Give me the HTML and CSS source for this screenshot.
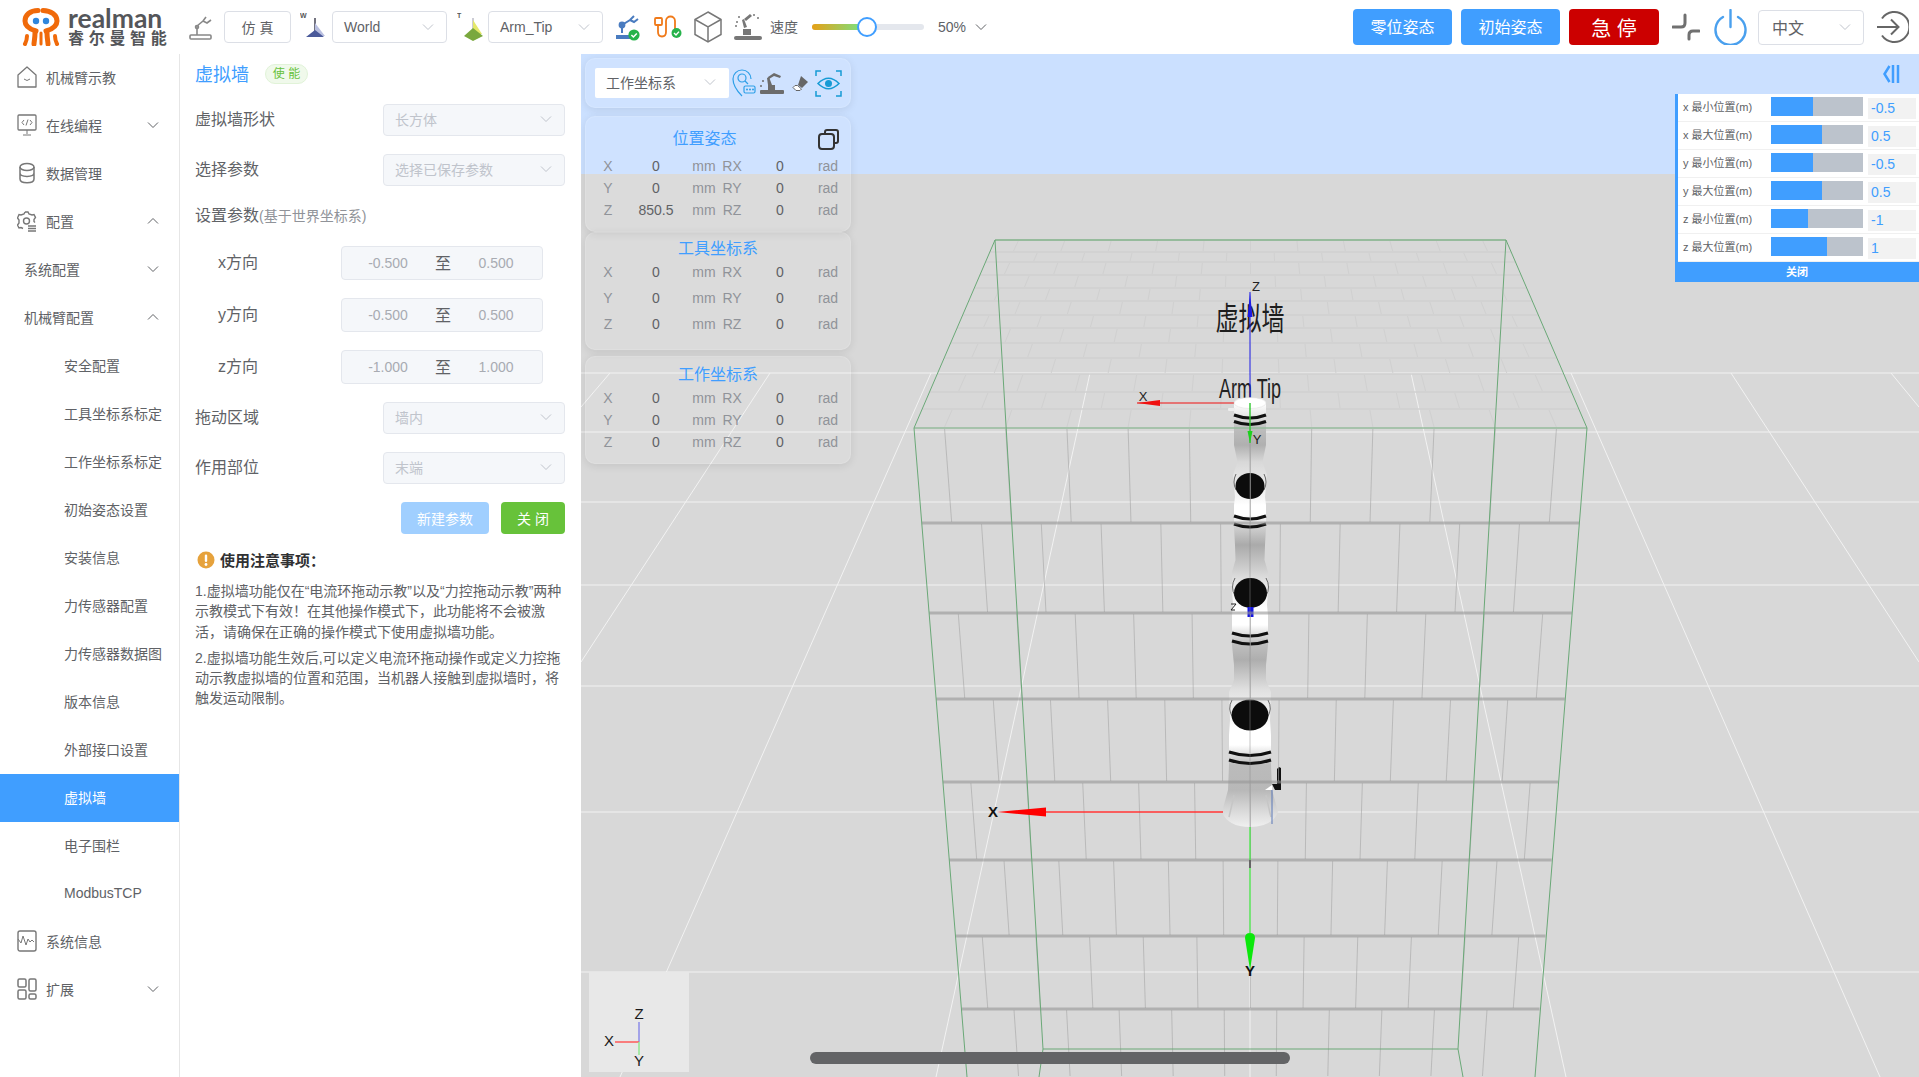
FILE: index.html
```html
<!DOCTYPE html>
<html lang="zh">
<head>
<meta charset="utf-8">
<title>realman</title>
<link rel="stylesheet" href="styles.css">
</head>
<body>
<svg class="defs" width="0" height="0">
  <symbol id="chev" viewBox="0 0 12 8"><path d="M1 1.500 6 6.500 11 1.500" fill="none" stroke="currentColor" stroke-width="1"/></symbol>
  <symbol id="arrowup" viewBox="0 0 12 8"><path d="M1 6.500 6 1.500 11 6.500" fill="none" stroke="currentColor" stroke-width="1"/></symbol>
  <linearGradient id="body" gradientUnits="userSpaceOnUse" x1="0" y1="0" x2="0" y2="1000">
    <stop offset=".403" stop-color="#fff"/><stop offset=".415" stop-color="#e8e8e8"/><stop offset=".428" stop-color="#bdbdbd"/><stop offset=".445" stop-color="#b0b0b0"/><stop offset=".462" stop-color="#d8d8d8"/><stop offset=".497" stop-color="#f5f5f5"/><stop offset=".505" stop-color="#fff"/><stop offset=".515" stop-color="#fff"/><stop offset=".527" stop-color="#d0d0d0"/><stop offset=".545" stop-color="#aaa"/><stop offset=".565" stop-color="#c8c8c8"/><stop offset=".585" stop-color="#e8e8e8"/><stop offset=".608" stop-color="#fff"/><stop offset=".625" stop-color="#fff"/><stop offset=".643" stop-color="#c0c0c0"/><stop offset=".66" stop-color="#aeaeae"/><stop offset=".69" stop-color="#e0e0e0"/><stop offset=".728" stop-color="#fff"/><stop offset=".745" stop-color="#fff"/><stop offset=".765" stop-color="#bbb"/><stop offset=".79" stop-color="#b8b8b8"/><stop offset=".81" stop-color="#d8d8d8"/><stop offset=".827" stop-color="#f0f0f0"/>
  </linearGradient>
</svg>

<header class="topbar">
  <div class="brand">
    <svg class="logo" viewBox="0 0 38 38">
      <g fill="none" stroke="#f06a0a" stroke-width="5" stroke-linecap="round">
        <path d="M16 2.500C8 2.500 3 7 3 13c0 5 4 8 11 10"/>
        <path d="M21 2.500C29 2.500 35 7 35 13c0 5-4 8-11 10"/>
        <path d="M13 25c0 5-1 9-1 11"/>
        <path d="M25 25c0 5 1 9 1 11"/>
        <path d="M5 28c0 3-1 6-2 8" stroke-width="4"/>
        <path d="M33 28c0 3 1 6 2 8" stroke-width="4"/>
        <path d="M19 25v11" stroke-width="3"/>
      </g>
      <circle cx="14" cy="13" r="3.200" fill="#2f86dc"/><circle cx="24" cy="13" r="3.200" fill="#2f86dc"/>
    </svg>
    <div class="brand-text"><span class="brand-en">realman</span><span class="brand-cn">睿尔曼智能</span></div>
  </div>

  <svg class="ic-robot ml-22" viewBox="0 0 23 28"><g fill="none" stroke="#888" stroke-width="1.600"><path d="M8 18V13L14 8l3-4M14 8l4 2 4-3"/><path d="M8 18v4"/><circle cx="8" cy="14" r="1.500"/><rect x="1" y="22" width="21" height="4" rx="1"/></g></svg>
  <button class="btn-plain ml-12">仿 真</button>
  <svg class="ic-axis ml-9" viewBox="0 0 30 30"><text x="0" y="6" class="ax-t">W</text><path d="M15 6v14" stroke="#445" stroke-width="1.500"/><path d="M15 11l10 13H15z" fill="#b9bfe0"/><path d="M15 18l9 7H6z" fill="#4a5a9a"/></svg>
  <div class="sel w115 ml-2"><span>World</span><svg class="chev"><use href="#chev"/></svg></div>
  <svg class="ic-axis ml-10" viewBox="0 0 30 30"><text x="0" y="6" class="ax-t">T</text><path d="M16 6v14" stroke="#99a" stroke-width="1"/><path d="M16 8l9 14H16z" fill="#e4e86a"/><path d="M16 16l10 8-10 5-9-5z" fill="#7aa83e"/></svg>
  <div class="sel w115 ml-1"><span>Arm_Tip</span><svg class="chev"><use href="#chev"/></svg></div>
  <svg class="ic-s25 ml-12" viewBox="0 0 25 28"><g fill="none" stroke="#4a7cc0" stroke-width="2"><path d="M7 20v-8l8-5 4-4M15 7l4 2 4-3"/><circle cx="7" cy="12" r="2.400" fill="#4a7cc0"/></g><rect x="1" y="22" width="17" height="4" fill="#4a7cc0"/><circle cx="19" cy="22" r="5.600" fill="#26b34b"/><path d="M16.400 22l2 2 3.400-3.600" fill="none" stroke="#fff" stroke-width="1.500"/></svg>
  <svg class="ic-s28 ml-14" viewBox="0 0 28 24"><g fill="none" stroke="#f07a1a" stroke-width="1.800"><rect x="1" y="3" width="7" height="7" rx="1"/><path d="M4 10v7c0 6 8 6 8 0V6c0-6 9-6 9 0v8"/></g><circle cx="22.500" cy="18" r="5" fill="#26b34b"/><path d="M20 18l2 2 3-3.400" fill="none" stroke="#fff" stroke-width="1.400"/></svg>
  <svg class="ic-s28h ml-12" viewBox="0 0 28 32"><g fill="none" stroke="#777" stroke-width="1.500"><path d="M14 1 27 8.500v15L14 31 1 23.500v-15z"/><path d="M1 8.500 14 16l13-7.500M14 16v15"/></g></svg>
  <svg class="ic-s30 ml-11" viewBox="0 0 30 30"><g fill="#777"><rect x="1" y="24" width="28" height="4" rx="2"/><rect x="10" y="17" width="8" height="6"/><path d="M11 16 9 8l2-1 3 8z"/><path d="M11 7l6-5 2 2-6 5z"/><circle cx="4" cy="10" r="1"/><circle cx="6" cy="5" r="1"/><circle cx="3" cy="14" r="1"/><circle cx="21" cy="3" r="1"/><circle cx="25" cy="6" r="1"/></g></svg>
  <span class="speed-label ml-7">速度</span>
  <div class="slider ml-14"><div class="slider-fill"></div><div class="slider-thumb"></div></div>
  <span class="speed-val ml-14">50%</span>
  <svg class="chev-big ml-9"><use href="#chev"/></svg>

  <div class="top-right">
    <button class="btn-main w99">零位姿态</button>
    <button class="btn-main w99 ml-9">初始姿态</button>
    <button class="btn-stop ml-9">急 停</button>
    <svg class="ic-s28h ml-13" viewBox="0 0 28 26"><g fill="none" stroke="#707070" stroke-width="3" stroke-linecap="round"><path d="M1 13h8q4 0 4-4V1"/><path d="M27 17h-6q-4 0-4 4v4"/></g></svg>
    <svg class="ic-power ml-14" viewBox="0 0 33 36"><g fill="none" stroke="#4aa0ee" stroke-width="2.400" stroke-linecap="round"><path d="M9 8A15 15 0 1 0 24 8"/><path d="M16.500 1v17"/></g></svg>
    <div class="sel w106 ml-11 lang"><span>中文</span><svg class="chev"><use href="#chev"/></svg></div>
    <svg class="ic-power ml-12" viewBox="0 0 33 33"><g fill="none" stroke="#666" stroke-width="2"><path d="M6 8a15 15 0 1 1 0 17"/><path d="M1 16.500h21M15 9l7.500 7.500L15 24"/></g></svg>
  </div>
</header>

<div class="main">
  <nav class="sidebar">
    <a class="item lv1"><svg class="mi" viewBox="0 0 20 24"><path d="M1 10 10 2l9 8v12H1z" fill="none" stroke="#777" stroke-width="1.300" stroke-linejoin="round"/><path d="M7 14q3 3 6 0" fill="none" stroke="#777"/></svg>机械臂示教</a>
    <a class="item lv1"><svg class="mi" viewBox="0 0 20 24"><rect x="1" y="2" width="18" height="15" rx="1" fill="none" stroke="#777" stroke-width="1.300"/><path d="M10 17v4M6 22h8M7 7l-2 2.500L7 12M13 7l2 2.500-2 2.500M11 6.500l-2 6" fill="none" stroke="#777"/></svg>在线编程<svg class="chev arrow"><use href="#chev"/></svg></a>
    <a class="item lv1"><svg class="mi" viewBox="0 0 20 24"><g fill="none" stroke="#777" stroke-width="1.500"><ellipse cx="10" cy="6" rx="7" ry="3.500"/><path d="M3 6v12c0 5 14 5 14 0V6M3 12c0 4.500 14 4.500 14 0"/></g></svg>数据管理</a>
    <a class="item lv1"><svg class="mi" viewBox="0 0 20 24"><g fill="none" stroke="#777" stroke-width="1.400"><path d="M8 3h3l1 2 3 1 2-.5 1.500 3-1.500 2v2l1 1M8 3 7 5 4 6 2 5.500.5 9 2 11v3L.5 16 2 19l2-.5 2 1"/><circle cx="9.500" cy="12" r="3"/><path d="M11 17h8M11 19.500h8M11 22h8"/></g></svg>配置<svg class="chev arrow"><use href="#arrowup"/></svg></a>
    <a class="item lv2">系统配置<svg class="chev arrow"><use href="#chev"/></svg></a>
    <a class="item lv2">机械臂配置<svg class="chev arrow"><use href="#arrowup"/></svg></a>
    <a class="item lv3">安全配置</a>
    <a class="item lv3">工具坐标系标定</a>
    <a class="item lv3">工作坐标系标定</a>
    <a class="item lv3">初始姿态设置</a>
    <a class="item lv3">安装信息</a>
    <a class="item lv3">力传感器配置</a>
    <a class="item lv3">力传感器数据图</a>
    <a class="item lv3">版本信息</a>
    <a class="item lv3">外部接口设置</a>
    <a class="item lv3 active">虚拟墙</a>
    <a class="item lv3">电子围栏</a>
    <a class="item lv3">ModbusTCP</a>
    <a class="item lv1"><svg class="mi" viewBox="0 0 20 24"><rect x="1" y="2" width="18" height="20" rx="2" fill="none" stroke="#777" stroke-width="1.400"/><path d="M1 10l3 4 2-7 3 9 2-6 2 3 2-2 2 2" fill="none" stroke="#777"/></svg>系统信息</a>
    <a class="item lv1"><svg class="mi" viewBox="0 0 20 24"><g fill="none" stroke="#777" stroke-width="1.500"><rect x="1" y="2" width="8" height="8" rx="1.500"/><rect x="12" y="2" width="7" height="12" rx="1.500"/><rect x="1" y="13" width="8" height="9" rx="1.500"/><rect x="12" y="17" width="7" height="5" rx="1.500"/></g></svg>扩展<svg class="chev arrow"><use href="#chev"/></svg></a>
  </nav>

  <section class="panel">
    <div class="panel-head"><span class="panel-title">虚拟墙</span><span class="tag">使 能</span></div>
    <div class="field f-shape"><label>虚拟墙形状</label><div class="dis-sel"><span>长方体</span><svg class="chev"><use href="#chev"/></svg></div></div>
    <div class="field f-param"><label>选择参数</label><div class="dis-sel"><span>选择已保存参数</span><svg class="chev"><use href="#chev"/></svg></div></div>
    <div class="param-title">设置参数<small>(基于世界坐标系)</small></div>
    <div class="range-row r-x"><label>x方向</label><div class="range"><span>-0.500</span><b>至</b><span>0.500</span></div></div>
    <div class="range-row"><label>y方向</label><div class="range"><span>-0.500</span><b>至</b><span>0.500</span></div></div>
    <div class="range-row"><label>z方向</label><div class="range"><span>-1.000</span><b>至</b><span>1.000</span></div></div>
    <div class="field f-drag"><label>拖动区域</label><div class="dis-sel"><span>墙内</span><svg class="chev"><use href="#chev"/></svg></div></div>
    <div class="field f-param"><label>作用部位</label><div class="dis-sel"><span>末端</span><svg class="chev"><use href="#chev"/></svg></div></div>
    <div class="actions"><button class="btn-new">新建参数</button><button class="btn-close">关 闭</button></div>
    <div class="note-head"><svg class="warn" viewBox="0 0 18 18"><circle cx="9" cy="9" r="8.500" fill="#e6a23c"/><rect x="7.800" y="3.500" width="2.400" height="7.500" rx="1.200" fill="#fff"/><circle cx="9" cy="13.500" r="1.400" fill="#fff"/></svg><strong>使用注意事项：</strong></div>
    <p class="note">1.虚拟墙功能仅在“电流环拖动示教”以及“力控拖动示教”两种示教模式下有效！在其他操作模式下，此功能将不会被激活，请确保在正确的操作模式下使用虚拟墙功能。</p>
    <p class="note n2">2.虚拟墙功能生效后,可以定义电流环拖动操作或定义力控拖动示教虚拟墙的位置和范围，当机器人接触到虚拟墙时，将触发运动限制。</p>
  </section>

  <section class="scene">
    <svg class="canvas" viewBox="581 54 1338 1023" width="1338" height="1023">
      <rect x="581" y="54" width="1338" height="120" fill="#cbe0ff"/>
      <rect x="581" y="174" width="1338" height="903" fill="#d8d8d8"/>
      <g id="floor" stroke="#f2f2f2" stroke-width="1">
        <path d="M581 373H1919M581 432H1919M581 502H1919M581 585H1919M581 686H1919M581 812H1919M581 972H1919" />
        <path d="M610 373 581 407M770 373 581 662M931 373 620 1077M1090 373 936 1077M1250 373V1077M1411 373 1566 1077M1571 373 1880 1077M1731 373 1919 662M1891 373 1919 407" fill="none"/>
      </g>
      <g id="bricks-top"></g>
      <text class="lbl-big" transform="translate(1250,330) scale(1,1.400)" text-anchor="middle">虚拟墙</text>
      <text class="lbl-arm" transform="translate(1250,398) scale(1,1.550)" text-anchor="middle">Arm Tip</text>

      <path d="M1250 403H1137" stroke="#f01010" stroke-width="1.200"/><path d="M1137 403l23-3v6z" fill="#f01010"/>
      <text class="lbl-ax" x="1143" y="401" text-anchor="middle">X</text>
      <path d="M1250 403V292" stroke="#1a1ae6" stroke-width="1"/><path d="M1250 293l-2.500 24h5z" fill="#1a1ae6"/>
      <text class="lbl-ax" x="1256" y="291" text-anchor="middle">Z</text>

      <g id="robot">
        <path d="M1234 403 1234 445Q1236 455 1237.500 462L1233 475 1235 497 1234 505V527L1235 545 1235.500 560 1232 572V590L1233 605 1232 615V645L1234 665V680L1229 692 1230 720 1229 735V765L1228 790 1222 812Q1228 827 1250 827 1272 827 1278 812L1272 790 1271 765V735L1270 720 1271 692 1266 680V665L1268 645V615L1267 605 1268 590V572L1264.500 560 1265 545 1266 527V505L1265 497 1267 475 1262.500 462Q1264 455 1266 445V403Z" fill="url(#body)"/>
        <ellipse cx="1250" cy="403" rx="16" ry="5.500" fill="#fff" stroke="#ddd" stroke-width=".5"/>
        <rect x="1228" y="408" width="7" height="3" rx="1" fill="#eee"/>
        <g fill="none" stroke="#111" stroke-width="3">
          <path d="M1234 415q16 6 32 0M1234 421.500q16 6 32 0"/>
          <path d="M1234 516q16 6 32 0M1234 524q16 6 32 0"/>
          <path d="M1232 633q18 6 36 0M1232 641q18 6 36 0"/>
          <path d="M1229 752q21 7 42 0M1229 760q21 7 42 0"/>
        </g>
        <g fill="none" stroke="#333" stroke-width=".7">
          <path d="M1236 474q-4 8 0 16M1264 474q4 8 0 16"/>
          <path d="M1235 578q-5 9 0 18M1266 578q5 9 0 18"/>
          <path d="M1232 700q-5 9 1 18M1268 700q5 9-1 18"/>
        </g>
        <g fill="none" stroke="#c6c6c6" stroke-width="1.500">
          <path d="M1234 795q-3 14-5 22M1266 795q3 14 5 22"/>
        </g>
        <ellipse cx="1250" cy="486" rx="14.500" ry="13" fill="#0c0c0c"/>
        <ellipse cx="1250.500" cy="593" rx="16.500" ry="15" fill="#0c0c0c"/>
        <ellipse cx="1250" cy="715" rx="18.500" ry="15.500" fill="#0c0c0c"/>
        <rect x="1247.500" y="607" width="6" height="10" fill="#1414e0"/>
        <path d="M1231 604h5l-5 6h4" fill="none" stroke="#222" stroke-width="1"/>
        <path d="M1250 403V827" stroke="#8a8a8a" stroke-width=".8" opacity=".6"/>
        <path d="M1275 790h6v-22l-2-1-2 2v15h-5z" fill="#111"/><path d="M1265 790l7-5v5z" fill="#fff"/>
        <path d="M1272 790v34" stroke="#5a78b8" stroke-width="1"/>
      </g>
      <g id="bricks-front"></g>

      <g fill="none" stroke="#6aa877" stroke-width="1">
        <path d="M995 240H1506" stroke="#96bb9c" stroke-width="2"/>
        <path d="M914 428H1587" stroke="#96bb9c" stroke-width="1.600"/>
        <path d="M995 240 914 428M1506 240 1587 428"/>
        <path d="M995 240 1043 1049 1039 1077M1506 240 1458 1049 1463 1077M1043 1049H1458"/>
        <path d="M914 428 967 1077M1587 428 1535 1077"/>
      </g>

      <path d="M1250 403V443" stroke="#1ed01e" stroke-width="1.200"/><path d="M1250 443l-2.500-12h5z" fill="#1ed01e"/>
      <text class="lbl-ax" x="1257" y="444" text-anchor="middle">Y</text>

      <path d="M1223 812H1046" stroke="#ff3030" stroke-width="1.500"/><path d="M997 812l49-4.500v9z" fill="#f00"/>
      <text class="lbl-xy" x="993" y="817" text-anchor="middle">X</text>
      <path d="M1250 827V933" stroke="#30e030" stroke-width="1.200"/><path d="M1250 970l-5-32q0-5 5-5 5 0 5 5z" fill="#0be80b"/><path d="M1250 860v8" stroke="#666" stroke-width="2"/>
      <text class="lbl-xy" x="1250" y="976" text-anchor="middle">Y</text>
    </svg>

    <div class="float-left">
      <div class="card tools">
        <div class="work-sel"><span>工作坐标系</span><svg class="chev"><use href="#chev"/></svg></div>
        <svg class="t-ic t22" viewBox="0 0 24 28"><g fill="none" stroke="#2d9fe8" stroke-width="1.200"><path d="M10 27C3 20 1 14 1 10a9 9 0 0 1 18 0"/><circle cx="10" cy="9" r="4"/><path d="M13 12l3 3"/><rect x="12" y="17" width="11" height="7" rx="1.500"/></g><g fill="#2d9fe8"><circle cx="15" cy="20.500" r="1"/><circle cx="18" cy="20.500" r="1"/><circle cx="21" cy="20.500" r="1"/></g></svg>
        <svg class="t-ic t26" viewBox="0 0 26 26"><g fill="#6c6c6c"><rect x="1" y="20" width="24" height="4" rx="1"/><rect x="9" y="15" width="7" height="5"/><path d="M9 15 8 8l2-1 3 8z"/><path d="M9 7l6-4 7 3-1 2-6-2-5 3z"/><circle cx="2" cy="16" r="1"/><circle cx="4" cy="11" r="1"/></g></svg>
        <svg class="t-ic t16" viewBox="0 0 16 16"><path d="M9 1l7 6-6 6-4-3z" fill="#666"/><path d="M5.500 10.500 9.500 14 8 15.500H4L1 12.500l2-2z" fill="#fff" stroke="#666"/></svg>
        <svg class="t-ic t27" viewBox="0 0 27 27"><g fill="none" stroke="#169bd5" stroke-width="1.500"><path d="M1 6V1h5M21 1h5v5M1 21v5h5M26 21v5h-5"/><path d="M3 13.500Q13.500 3 24 13.500 13.500 24 3 13.500z"/></g><circle cx="13.500" cy="13.500" r="3.500" fill="#169bd5"/></svg>
      </div>
      <div class="card pose c-pose">
        <div class="card-title narrow">位置姿态</div>
        <svg class="copy" viewBox="0 0 21 21"><g fill="none" stroke="#333" stroke-width="2"><path d="M7 4V3q0-2 2-2h9q2 0 2 2v9q0 2-2 2h-1"/><rect x="1" y="5" width="15" height="15" rx="3"/></g></svg>
        <div class="grid g22 mt0">
          <i>X</i><em>0</em><i>mm</i><i>RX</i><em>0</em><i>rad</i>
          <i>Y</i><em>0</em><i>mm</i><i>RY</i><em>0</em><i>rad</i>
          <i>Z</i><em>850.5</em><i>mm</i><i>RZ</i><em>0</em><i>rad</i>
        </div>
      </div>
      <div class="card pose c-tool">
        <div class="card-title">工具坐标系</div>
        <div class="grid g26 mtn6">
          <i>X</i><em>0</em><i>mm</i><i>RX</i><em>0</em><i>rad</i>
          <i>Y</i><em>0</em><i>mm</i><i>RY</i><em>0</em><i>rad</i>
          <i>Z</i><em>0</em><i>mm</i><i>RZ</i><em>0</em><i>rad</i>
        </div>
      </div>
      <div class="card pose c-work">
        <div class="card-title">工作坐标系</div>
        <div class="grid g22 mtn4">
          <i>X</i><em>0</em><i>mm</i><i>RX</i><em>0</em><i>rad</i>
          <i>Y</i><em>0</em><i>mm</i><i>RY</i><em>0</em><i>rad</i>
          <i>Z</i><em>0</em><i>mm</i><i>RZ</i><em>0</em><i>rad</i>
        </div>
      </div>
    </div>

    <svg class="collapse" viewBox="0 0 17 18"><g fill="none" stroke="#409eff" stroke-width="2.500"><path d="M6.500 1 1.500 9 6.500 17"/><path d="M10 0V18M15 0V18"/></g></svg>

    <div class="limits">
      <div class="lim"><label>x 最小位置(m)</label><div class="bar"><div class="fill w42"></div></div><div class="val">-0.5</div></div>
      <div class="lim"><label>x 最大位置(m)</label><div class="bar"><div class="fill w51"></div></div><div class="val">0.5</div></div>
      <div class="lim"><label>y 最小位置(m)</label><div class="bar"><div class="fill w42"></div></div><div class="val">-0.5</div></div>
      <div class="lim"><label>y 最大位置(m)</label><div class="bar"><div class="fill w51"></div></div><div class="val">0.5</div></div>
      <div class="lim"><label>z 最小位置(m)</label><div class="bar"><div class="fill w37"></div></div><div class="val">-1</div></div>
      <div class="lim"><label>z 最大位置(m)</label><div class="bar"><div class="fill w56"></div></div><div class="val">1</div></div>
      <div class="lim-close">关闭</div>
    </div>

    <div class="mini">
      <svg viewBox="0 0 100 100" width="100" height="100">
        <path d="M50 70V50" stroke="#8c8ce8" stroke-width="1.500"/><path d="M50 70H26" stroke="#ff5a5a" stroke-width="1.500"/><path d="M50 70V83" stroke="#90e890" stroke-width="1.500"/>
        <text class="mini-t" x="50" y="47" text-anchor="middle">Z</text>
        <text class="mini-t" x="20" y="74" text-anchor="middle">X</text>
        <text class="mini-t" x="50" y="94" text-anchor="middle">Y</text>
      </svg>
    </div>
    <div class="hscroll"></div>
  </section>
</div>
<script src="scene.js"></script>
</body>
</html>
```
FILE: styles.css
```css
* { box-sizing: border-box; }
html, body { margin: 0; height: 1077px; overflow: hidden; background: #fff; }
body { font: 14px "Liberation Sans", "Noto Sans CJK SC", sans-serif; color: #606266; }
.defs { position: absolute; }
button { font: inherit; border: 0; padding: 0; }

.topbar { height: 54px; display: flex; align-items: center; padding-left: 22px; }
.brand { display: flex; align-items: center; width: 145px; flex: none; }
.logo { width: 38px; height: 38px; flex: none; }
.brand-text { margin-left: 8px; padding-bottom: 2px; display: flex; flex-direction: column; color: #54565a; }
.brand-en { font: 700 26.500px/22px "Lato", sans-serif; }
.brand-cn { font: 700 16px/16px "Noto Sans CJK SC", sans-serif; letter-spacing: 4.700px; white-space: nowrap; }
.ml-1 { margin-left: 1px; } .ml-2 { margin-left: 2px; } .ml-7 { margin-left: 7px; } .ml-9 { margin-left: 9px; }
.ml-10 { margin-left: 10px; } .ml-11 { margin-left: 11px; } .ml-12 { margin-left: 12px; } .ml-13 { margin-left: 13px; }
.ml-14 { margin-left: 14px; } .ml-22 { margin-left: 22px; }
.ic-robot { width: 23px; height: 28px; flex: none; }
.btn-plain { width: 67px; height: 32px; background: #fff; border: 1px solid #dcdfe6; border-radius: 4px; color: #606266; flex: none; }
.ic-axis { width: 30px; height: 30px; flex: none; }
.ax-t { font: 700 7px "Liberation Sans", sans-serif; fill: #555; }
.sel { height: 32px; border: 1px solid #dcdfe6; border-radius: 4px; display: flex; align-items: center; justify-content: space-between; padding: 0 12px 0 11px; background: #fff; flex: none; }
.w115 { width: 115px; } .w106 { width: 106px; }
.lang { font-size: 16px; padding-left: 13px; height: 35px; }
.chev { width: 12px; height: 8px; color: #c0c4cc; flex: none; }
.ic-s25 { width: 25px; height: 28px; flex: none; }
.ic-s28 { width: 28px; height: 24px; flex: none; }
.ic-s28h { width: 28px; height: 32px; flex: none; }
.ic-s30 { width: 30px; height: 30px; flex: none; }
.speed-label { width: 28px; flex: none; padding-bottom: 2px; }
.slider { width: 112px; height: 6px; border-radius: 3px; background: #e4e7ed; position: relative; flex: none; }
.slider-fill { width: 55px; height: 6px; border-radius: 3px 0 0 3px; background: linear-gradient(90deg, #e6a017, #6fe88a); }
.slider-thumb { position: absolute; left: 45px; top: -7px; width: 20px; height: 20px; border-radius: 50%; background: #fff; border: 2px solid #409eff; }
.speed-val { flex: none; width: 28px; }
.chev-big { width: 12px; height: 8px; color: #606266; flex: none; }
.top-right { margin-left: auto; display: flex; align-items: center; padding-right: 10px; }
.btn-main { height: 36px; background: #409eff; color: #fff; border-radius: 4px; font-size: 16px; flex: none; padding-bottom: 2px; }
.w99 { width: 99px; }
.btn-stop { width: 90px; height: 36px; background: #cc0000; color: #fff; border-radius: 4px; font-size: 20px; flex: none; }
.ic-power { width: 33px; height: 36px; flex: none; }

.main { display: flex; height: 1023px; }
.sidebar { width: 180px; flex: none; border-right: 1px solid #e6e6e6; }
.item { height: 48px; display: flex; align-items: center; color: #606266; white-space: nowrap; padding-bottom: 2px; }
.lv1 { padding-left: 17px; }
.lv2 { padding-left: 24px; }
.lv3 { padding-left: 64px; }
.mi { width: 20px; height: 24px; margin-right: 9px; flex: none; }
.arrow { margin-left: auto; margin-right: 20px; color: #606266; }
.active { background: #409eff; color: #fff; }

.panel { width: 401px; flex: none; padding: 0 16px 0 15px; background: #fff; }
.panel-head { height: 39px; display: flex; align-items: center; }
.panel-title { font-size: 18px; color: #409eff; padding-bottom: 2px; }
.tag { margin-left: 16px; width: 43px; height: 20px; border-radius: 10px; background: #f0f9eb; border: 1px solid #e1f3d8; color: #67c23a; font-size: 12px; display: flex; align-items: center; justify-content: center; padding-bottom: 2px; }
.field { display: flex; justify-content: space-between; align-items: center; font-size: 16px; }
.field label { color: #606266; padding-bottom: 4px; }
.f-shape { margin-top: 11px; }
.f-param { margin-top: 18px; }
.f-drag { margin-top: 18px; }
.dis-sel { width: 182px; height: 32px; background: #f5f7fa; border: 1px solid #e4e7ed; border-radius: 4px; font-size: 14px; color: #c0c4cc; display: flex; align-items: center; justify-content: space-between; padding: 0 12px 2px 11px; }
.param-title { font-size: 16px; line-height: 24px; margin-top: 18px; color: #606266; }
.param-title small { font-size: 14px; color: #909399; }
.range-row { display: flex; align-items: center; height: 34px; margin-top: 18px; padding-left: 23px; font-size: 16px; }
.range-row label { width: 123px; padding-bottom: 4px; }
.range { width: 202px; height: 34px; background: #f5f7fa; border: 1px solid #e4e7ed; border-radius: 4px; display: grid; grid-template-columns: 86px 30px 1fr; align-items: center; font-size: 14px; color: #a8abb2; padding-bottom: 1px; }
.range span { text-align: center; padding-left: 6px; }
.range span:last-child { padding-left: 0; padding-right: 8px; }
.range b { font-weight: 400; font-size: 16px; color: #606266; text-align: center; padding-bottom: 2px; }
.actions { display: flex; justify-content: flex-end; gap: 12px; margin-top: 18px; }
.btn-new, .btn-close { height: 32px; color: #fff; border-radius: 4px; }
.btn-new { width: 88px; background: #a0cfff; }
.btn-close { width: 64px; background: #67c23a; }
.note-head { display: flex; align-items: center; margin-top: 15px; padding-left: 2px; height: 20px; }
.warn { width: 18px; height: 18px; margin-right: 5px; flex: none; margin-top: 2px; }
.note-head strong { font-size: 15px; color: #303133; }
.note { margin: 12px 0 0; font-size: 14px; line-height: 20.250px; width: 370px; color: #606266; }
.n2 { margin-top: 6px; }

.scene { flex: 1; position: relative; overflow: hidden; }
.canvas { display: block; }
.lbl-big { font: 23px "Noto Sans CJK SC", sans-serif; fill: #1e1e1e; }
.lbl-arm { font: 18px "Liberation Sans", sans-serif; fill: #222; }
.lbl-ax { font: 13px "Liberation Sans", sans-serif; fill: #222; }
.lbl-xy { font: 700 15px "Liberation Sans", sans-serif; fill: #111; }

.float-left { position: absolute; left: 4px; top: 4px; width: 266px; display: flex; flex-direction: column; }
.card { background: rgba(255,255,255,.09); border: 1px solid rgba(255,255,255,.12); border-radius: 10px; box-shadow: 0 2px 8px rgba(0,0,0,.09); position: relative; }
.tools { height: 50px; display: flex; align-items: center; padding-left: 9px; }
.work-sel { width: 134px; height: 30px; background: #fff; border-radius: 2px; display: flex; align-items: center; justify-content: space-between; padding: 0 13px 2px 11px; flex: none; }
.t-ic { flex: none; }
.t22 { width: 24px; height: 28px; margin-left: 3px; }
.t26 { width: 26px; height: 26px; margin-left: 3px; }
.t16 { width: 16px; height: 16px; margin-left: 7px; }
.t27 { width: 27px; height: 27px; margin-left: 7px; }
.pose { padding-left: 7px; }
.c-pose { height: 116px; margin-top: 8px; padding-top: 6px; }
.c-tool { height: 118px; }
.c-work { height: 108px; margin-top: 6px; padding-top: 2px; }
.card-title { height: 32px; line-height: 32px; margin-left: -7px; text-align: center; font-size: 16px; color: #409eff; }
.narrow { padding-right: 27px; }
.copy { position: absolute; right: 11px; top: 12px; width: 21px; height: 21px; }
.grid { display: grid; grid-template-columns: 30px 66px 30px 26px 70px 26px; text-align: center; }
.grid i, .grid em { font-style: normal; white-space: nowrap; }
.grid i { color: #909399; }
.grid em { color: #606266; }
.g22 { grid-auto-rows: 22px; line-height: 22px; }
.g26 { grid-auto-rows: 26px; line-height: 26px; }
.mt0 { margin-top: 0; }
.mtn6 { margin-top: -6px; }
.mtn4 { margin-top: -4px; }

.collapse { position: absolute; left: 1302px; top: 11px; width: 17px; height: 18px; }
.limits { position: absolute; right: 0; top: 40px; width: 244px; background: #fff; border-left: 3px solid #409eff; font-size: 11px; }
.lim { height: 28px; display: flex; align-items: center; border-bottom: 1px solid #f0f0f0; padding-left: 5px; }
.lim label { width: 88px; flex: none; white-space: nowrap; padding-bottom: 3px; }
.bar { width: 92px; height: 19px; background: #bcc3cc; flex: none; margin-top: -2px; }
.fill { height: 19px; background: #409eff; }
.w42 { width: 42px; } .w51 { width: 51px; } .w37 { width: 37px; } .w56 { width: 56px; }
.val { margin-left: 5px; margin-top: 2px; width: 48px; height: 21px; background: #f2f2f2; color: #409eff; font-size: 14px; line-height: 21px; padding-left: 3px; flex: none; }
.lim-close { height: 20px; margin-left: -3px; background: #409eff; color: #fff; text-align: center; line-height: 20px; font-size: 11px; font-weight: 700; }

.mini { position: absolute; left: 8px; top: 918px; width: 100px; height: 100px; background: #e8e8e8; }
.mini-t { font: 15px "Liberation Sans", sans-serif; fill: #1a1a1a; }
.hscroll { position: absolute; left: 229px; top: 998px; width: 480px; height: 12px; background: #636466; border-radius: 6px; }
```
FILE: scene.js
```js
(function () {
  var NS = 'http://www.w3.org/2000/svg';
  function line(g, x1, y1, x2, y2, stroke, w) {
    var l = document.createElementNS(NS, 'line');
    l.setAttribute('x1', x1); l.setAttribute('y1', y1);
    l.setAttribute('x2', x2); l.setAttribute('y2', y2);
    l.setAttribute('stroke', stroke); l.setAttribute('stroke-width', w);
    g.appendChild(l);
  }
  var CX = 1250.5;
  function bricks(g, rows, halfWidth, horiz, hw, vert, startHalf) {
    for (var i = 0; i < rows.length - 1; i++) {
      var y1 = rows[i], y2 = rows[i + 1];
      if (i > 0) {
        line(g, CX - halfWidth(y1), y1, CX + halfWidth(y1), y1, horiz, hw);
      }
      var half = (i % 2 === 0) === startHalf;
      var count = half ? 11 : 10;
      for (var k = 0; k < count; k++) {
        var u = (half ? k + 0.5 : k + 1) / 11 * 2 - 1;
        line(g, CX + u * halfWidth(y1), y1 + 1, CX + u * halfWidth(y2), y2 - 1, vert, 1);
      }
    }
  }
  var topRows = [240, 252, 262, 275, 288, 301, 315, 328, 343, 358, 374, 392, 409, 428];
  bricks(document.getElementById('bricks-top'), topRows, function (y) {
    return 255.5 + (y - 240) * (81 / 188);
  }, '#d0d0d0', 1.5, '#d0d0d0', true);

  var frontRows = [428, 523, 613, 699, 782, 860, 936, 1009, 1077];
  bricks(document.getElementById('bricks-front'), frontRows, function (y) {
    return 336.5 - (y - 428) * (53 / 649);
  }, 'rgba(150,150,150,.6)', 3, 'rgba(165,165,165,.6)', true);
})();
```
